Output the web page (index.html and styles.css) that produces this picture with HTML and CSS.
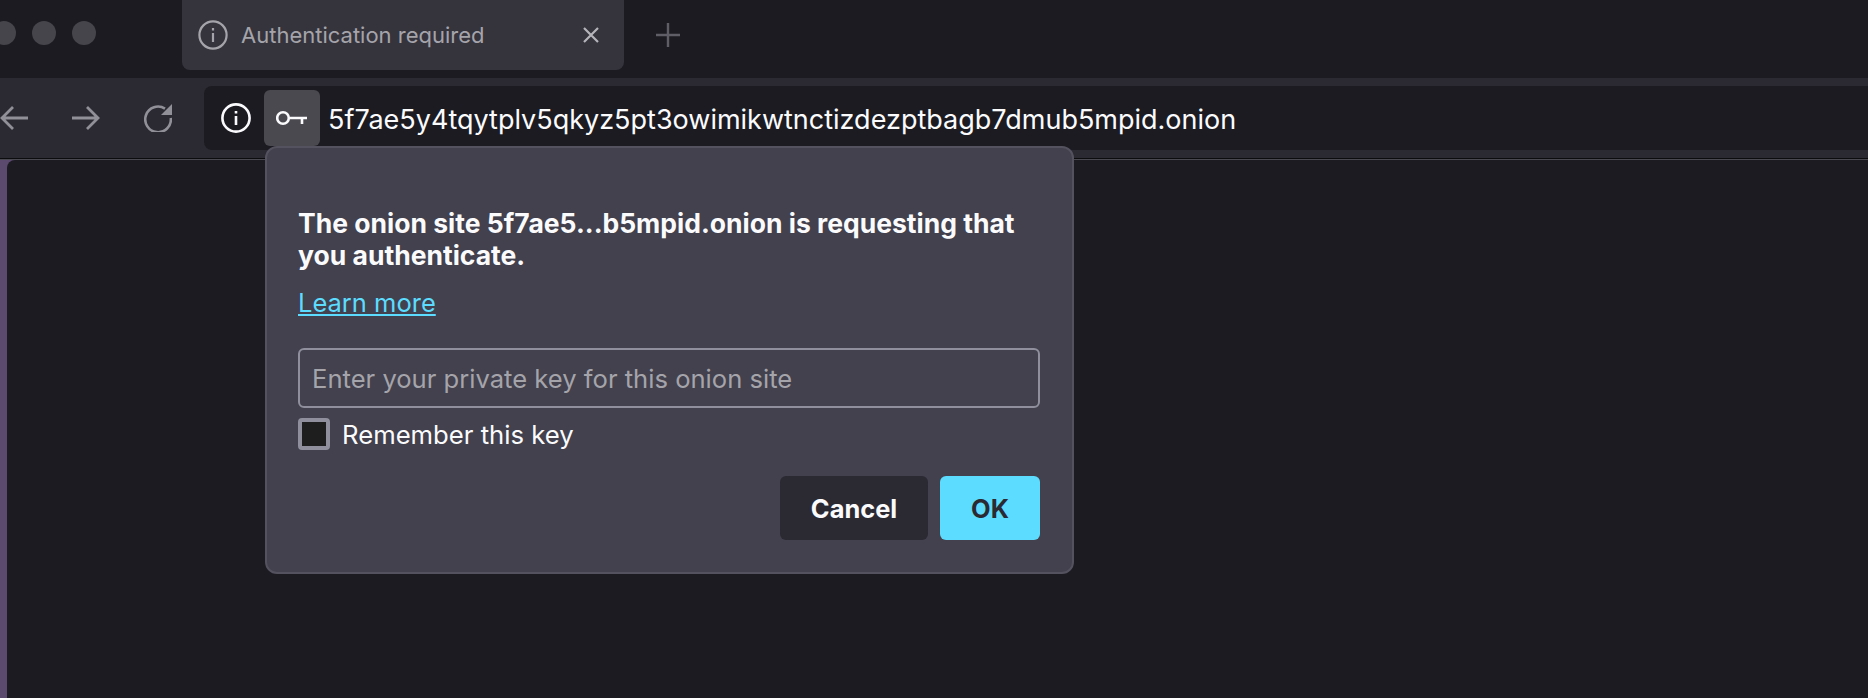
FILE: index.html
```html
<!DOCTYPE html>
<html lang="en">
<head>
    <meta charset="UTF-8">
    <title>Authentication required</title>
    <link rel="stylesheet" href="styles.css">
</head>
<body>
    <!-- Tab strip -->
    <div class="tabstrip">
        <div class="dots">
            <span class="dot"></span>
            <span class="dot"></span>
            <span class="dot"></span>
        </div>
        <div class="tab">
            <svg class="tab-info" viewBox="0 0 30 30" width="30" height="30" fill="none" stroke="#a5a4ab" stroke-width="2.2">
                <circle cx="15" cy="15" r="13.6"/>
                <path d="M15 13v9M15 8v2.6"/>
            </svg>
            <span class="tab-title">Authentication required</span>
            <svg class="tab-close" viewBox="0 0 18 18" width="18" height="18" fill="none" stroke="#b5b4ba" stroke-width="2.2">
                <path d="M2 2l14 14M16 2L2 16"/>
            </svg>
        </div>
        <svg class="new-tab" viewBox="0 0 24 24" width="24" height="24" fill="none" stroke="#5f5e66" stroke-width="2.4">
            <path d="M12 0v24M0 12h24"/>
        </svg>
    </div>

    <!-- Toolbar -->
    <div class="toolbar">
        <div class="nav">
            <svg viewBox="0 0 28 28" width="28" height="28" fill="none" stroke="#918f98" stroke-width="2.8">
                <path d="M28 14H2M13 3L2 14l11 11"/>
            </svg>
            <svg viewBox="0 0 28 28" width="28" height="28" fill="none" stroke="#918f98" stroke-width="2.8">
                <path d="M0 14h26M15 3l11 11-11 11"/>
            </svg>
            <svg viewBox="0 0 28 28" width="28" height="28" fill="none" stroke="#918f98" stroke-width="2.6">
                <path d="M21 4.6A12.8 12.8 0 1 0 26.8 14"/>
                <path d="M28 0v11H17z" fill="#918f98" stroke="none"/>
            </svg>
        </div>
        <div class="urlbar">
            <svg class="url-info" viewBox="0 0 30 30" width="30" height="30" fill="none" stroke="#fbfbfe" stroke-width="2.6">
                <circle cx="15" cy="15" r="13.6"/>
                <path d="M15 13v9M15 8v2.6"/>
            </svg>
            <div class="key-box">
                <svg viewBox="0 0 32 16" width="32" height="16" fill="none" stroke="#fbfbfe" stroke-width="2.6">
                    <circle cx="7" cy="8" r="5.8"/>
                    <path d="M13 8h18M26 8v6"/>
                </svg>
            </div>
            <span class="url">5f7ae5y4tqytplv5qkyz5pt3owimikwtnctizdezptbagb7dmub5mpid.onion</span>
        </div>
    </div>
    <div class="toolbar-line"></div>

    <!-- Page area -->
    <div class="browser">
        <div class="sidebar-edge"></div>
        <div class="content"></div>
    </div>

    <!-- Popup -->
    <div class="popup">
        <h1 class="popup-title">The onion site 5f7ae5...b5mpid.onion is requesting that you authenticate.</h1>
        <a class="learn-more" href="#">Learn more</a>
        <input class="key-input" type="text" placeholder="Enter your private key for this onion site">
        <label class="remember">
            <span class="check"></span>
            Remember this key
        </label>
        <div class="buttons">
            <button class="btn btn-cancel">Cancel</button>
            <button class="btn btn-ok">OK</button>
        </div>
    </div>
</body>
</html>
```

FILE: styles.css
```css
* {
    box-sizing: border-box;
}

html, body {
    margin: 0;
    height: 698px;
    overflow: hidden;
}

body {
    display: flex;
    flex-direction: column;
    font-family: Inter, "Liberation Sans", sans-serif;
    background: #1c1b22;
    color: #fbfbfe;
}

.tabstrip {
    height: 78px;
    display: flex;
    align-items: flex-start;
    background: #1c1b22;
    flex-shrink: 0;
}

.dots {
    display: flex;
    gap: 16px;
    margin: 21px 0 0 -8px;
}

.dot {
    width: 24px;
    height: 24px;
    border-radius: 50%;
    background: #46454c;
}

.tab {
    width: 442px;
    height: 78px;
    margin: -8px 0 0 86px;
    padding: 8px 24px 0 16px;
    display: flex;
    align-items: center;
    background: #35343d;
    border-radius: 8px;
}

.tab-title {
    margin-left: 13px;
    font-size: 22px;
    color: #a5a4ab;
    flex: 1;
}

.new-tab {
    margin: 23px 0 0 32px;
}

.toolbar {
    height: 80px;
    display: flex;
    align-items: center;
    background: #2b2a33;
    flex-shrink: 0;
}

.nav {
    width: 204px;
    display: flex;
    gap: 44px;
}

.urlbar {
    flex: 1;
    height: 64px;
    padding-left: 16px;
    display: flex;
    align-items: center;
    background: #1c1b22;
    border-radius: 8px 0 0 8px;
}

.url-info {
    margin-left: 1px;
}

.key-box {
    width: 56px;
    height: 56px;
    margin-left: 13px;
    display: flex;
    align-items: center;
    justify-content: center;
    background: #4a494f;
    border-radius: 6px;
}

.url {
    margin-left: 8px;
    padding-top: 2px;
    font-size: 27px;
    white-space: nowrap;
}

.toolbar-line {
    height: 2px;
    background: #4a4951;
    border-top: 1px solid #0c0c0f;
    flex-shrink: 0;
}

.browser {
    flex: 1;
    display: flex;
    background: #5b4a6e;
}

.sidebar-edge {
    width: 7px;
}

.content {
    flex: 1;
    background: #1c1b22;
    border-radius: 8px 0 0 0;
}

.popup {
    position: absolute;
    left: 265px;
    top: 146px;
    width: 809px;
    height: 428px;
    padding: 59px 31px 0;
    background: #42414d;
    border: 2px solid #53525e;
    border-radius: 12px;
}

.popup-title {
    margin: 0;
    font-size: 26.5px;
    font-weight: 700;
    line-height: 32px;
}

.learn-more {
    display: inline-block;
    margin-top: 16px;
    font-size: 25.5px;
    line-height: 32px;
    color: #5cdcff;
}

.key-input {
    display: block;
    width: 742px;
    height: 60px;
    margin-top: 29px;
    padding: 0 12px;
    font-family: inherit;
    font-size: 25.6px;
    color: #fbfbfe;
    background: transparent;
    border: 2px solid #8f8f9d;
    border-radius: 6px;
}

.key-input::placeholder {
    color: #a5a4ab;
    opacity: 1;
}

.remember {
    display: flex;
    align-items: center;
    gap: 12px;
    margin-top: 10px;
    font-size: 25.7px;
}

.check {
    width: 32px;
    height: 32px;
    background: #1f1e1e;
    border: 4px solid #8f8f9d;
    border-radius: 4px;
}

.buttons {
    display: flex;
    justify-content: flex-end;
    gap: 12px;
    width: 742px;
    margin-top: 26px;
}

.btn {
    height: 64px;
    font-family: inherit;
    font-size: 25.4px;
    font-weight: 700;
    border: none;
    border-radius: 6px;
}

.btn-cancel {
    width: 148px;
    color: #fbfbfe;
    background: #2b2a33;
}

.btn-ok {
    width: 100px;
    color: #2b2a33;
    background: #5cdcff;
}
```
